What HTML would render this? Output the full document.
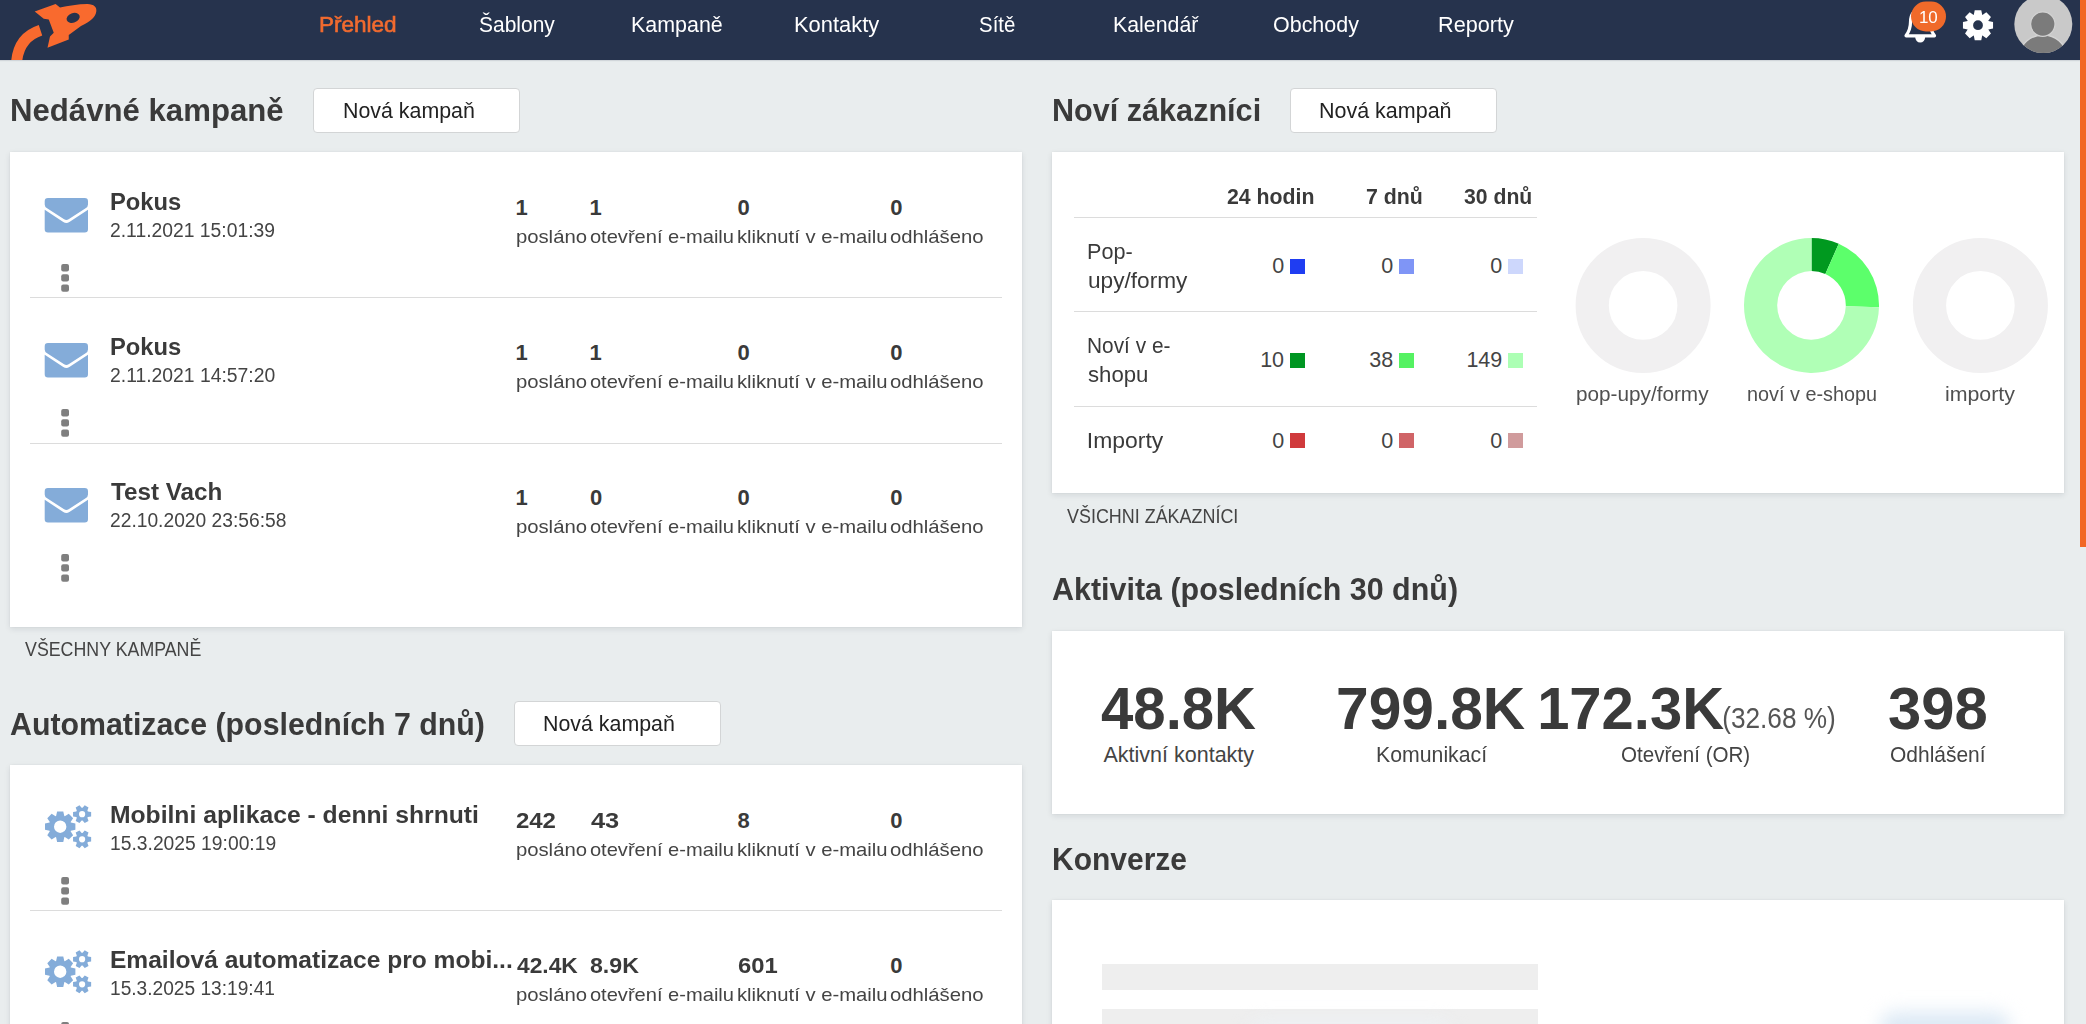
<!DOCTYPE html>
<html><head><meta charset="utf-8"><style>
html,body{margin:0;padding:0;}
body{width:2086px;height:1024px;overflow:hidden;background:#e9edee;font-family:"Liberation Sans",sans-serif;position:relative;}
.t{position:absolute;white-space:nowrap;}
.hdr{position:absolute;left:0;top:0;width:2086px;height:60px;background:#26334d;box-shadow:0 1px 1px rgba(38,51,77,0.12);}
.card{position:absolute;background:#fff;box-shadow:0 2px 6px rgba(20,30,50,0.10),0 0 2px rgba(0,0,0,0.05);}
.btn{position:absolute;background:#fff;border:1px solid #d3d5d6;border-radius:4px;box-sizing:border-box;}
.sep{position:absolute;height:1px;background:#dcdcdc;}
.sq{position:absolute;width:14.5px;height:14.5px;}
svg{position:absolute;left:0;top:0;}
</style></head><body>
<div class="hdr"></div>
<div class="card" style="left:10px;top:152px;width:1012px;height:475px;"></div>
<div class="card" style="left:10px;top:765px;width:1012px;height:300px;"></div>
<div class="card" style="left:1052px;top:152px;width:1012px;height:341px;"></div>
<div class="card" style="left:1052px;top:631px;width:1012px;height:183px;"></div>
<div class="card" style="left:1052px;top:900px;width:1012px;height:200px;"></div>
<div class="btn" style="left:313px;top:88px;width:207px;height:45px;"></div>
<div class="btn" style="left:514px;top:701px;width:207px;height:45px;"></div>
<div class="btn" style="left:1290px;top:88px;width:207px;height:45px;"></div>
<div class="sep" style="left:30px;top:297px;width:972px;"></div>
<div class="sep" style="left:30px;top:443px;width:972px;"></div>
<div class="sep" style="left:30px;top:910px;width:972px;"></div>
<div class="sep" style="left:1074px;top:217px;width:463px;"></div>
<div class="sep" style="left:1074px;top:311px;width:463px;"></div>
<div class="sep" style="left:1074px;top:406px;width:463px;"></div>
<div class="sq" style="left:1290px;top:259px;background:#1f3df2"></div>
<div class="sq" style="left:1399px;top:259px;background:#7f95f6"></div>
<div class="sq" style="left:1508px;top:259px;background:#cdd7fc"></div>
<div class="sq" style="left:1290px;top:353px;background:#009622"></div>
<div class="sq" style="left:1399px;top:353px;background:#55f262"></div>
<div class="sq" style="left:1508px;top:353px;background:#acffb4"></div>
<div class="sq" style="left:1290px;top:433px;background:#d03a3c"></div>
<div class="sq" style="left:1399px;top:433px;background:#d06467"></div>
<div class="sq" style="left:1508px;top:433px;background:#d09b9c"></div>
<div style="position:absolute;left:1102px;top:964px;width:436px;height:26px;background:#eeeeee"></div>
<div style="position:absolute;left:1102px;top:1009px;width:436px;height:26px;background:#eeeeee"></div>
<div style="position:absolute;left:1880px;top:1012px;width:130px;height:30px;border-radius:15px;background:#dce9f5;filter:blur(9px);"></div>
<div style="position:absolute;left:1250px;top:1022px;width:200px;height:20px;border-radius:10px;background:#eef2f6;filter:blur(9px);"></div>
<div style="position:absolute;left:2080px;top:0;width:6px;height:547px;background:#f26724"></div>
<svg width="2086" height="1024" viewBox="0 0 2086 1024">
<g fill="#f96a2e">
<path d="M34.7,11.6 L55.6,4.1 L60,7.5 C68,6 78,4.1 87.5,4.1 C94,4.3 97,7.5 96.3,11.5 C95.5,17 91,21 81,26 L68.75,34.9 L68.75,39.4 L47.5,47.8 L50,36.6 L53.75,32.8 L48.75,19.4 L43.75,18.75 Z M79.5,15.5 A6.6,4.6 -20 1,0 66.8,20.3 A6.6,4.6 -20 1,0 79.5,15.5 Z" fill-rule="evenodd"/>
</g>
<clipPath id="hc"><rect x="0" y="0" width="200" height="60"/></clipPath><path clip-path="url(#hc)" d="M40.5,30.2 C29,34 17.5,43 16.5,64" fill="none" stroke="#f96a2e" stroke-width="11"/>
<g fill="#84acd9"><path d="M48,198.10 H84.7 A3.3,3.3 0 0 1 88,201.40 V204.40 Q88,206.70 85.6,208.30 L68.6,219.30 Q66.35,220.80 64.1,219.30 L47.1,208.30 Q44.7,206.70 44.7,204.40 V201.40 A3.3,3.3 0 0 1 48,198.10 Z"/><path d="M44.7,209.80 L63.3,222.00 Q66.35,224.00 69.4,222.00 L88,209.80 V229.30 A3.3,3.3 0 0 1 84.7,232.60 H48 A3.3,3.3 0 0 1 44.7,229.30 Z"/><path d="M48,343.10 H84.7 A3.3,3.3 0 0 1 88,346.40 V349.40 Q88,351.70 85.6,353.30 L68.6,364.30 Q66.35,365.80 64.1,364.30 L47.1,353.30 Q44.7,351.70 44.7,349.40 V346.40 A3.3,3.3 0 0 1 48,343.10 Z"/><path d="M44.7,354.80 L63.3,367.00 Q66.35,369.00 69.4,367.00 L88,354.80 V374.30 A3.3,3.3 0 0 1 84.7,377.60 H48 A3.3,3.3 0 0 1 44.7,374.30 Z"/><path d="M48,488.10 H84.7 A3.3,3.3 0 0 1 88,491.40 V494.40 Q88,496.70 85.6,498.30 L68.6,509.30 Q66.35,510.80 64.1,509.30 L47.1,498.30 Q44.7,496.70 44.7,494.40 V491.40 A3.3,3.3 0 0 1 48,488.10 Z"/><path d="M44.7,499.80 L63.3,512.00 Q66.35,514.00 69.4,512.00 L88,499.80 V519.30 A3.3,3.3 0 0 1 84.7,522.60 H48 A3.3,3.3 0 0 1 44.7,519.30 Z"/><path fill-rule="evenodd" d="M70.84,822.59 L75.39,823.62 L75.39,829.78 L70.84,830.81 L70.62,831.32 L73.12,835.26 L68.76,839.62 L64.82,837.12 L64.31,837.34 L63.28,841.89 L57.12,841.89 L56.09,837.34 L55.58,837.12 L51.64,839.62 L47.28,835.26 L49.78,831.32 L49.56,830.81 L45.01,829.78 L45.01,823.62 L49.56,822.59 L49.78,822.08 L47.28,818.14 L51.64,813.78 L55.58,816.28 L56.09,816.06 L57.12,811.51 L63.28,811.51 L64.31,816.06 L64.82,816.28 L68.76,813.78 L73.12,818.14 L70.62,822.08Z M66.40,826.70 A6.2,6.2 0 1,0 54.00,826.70 A6.2,6.2 0 1,0 66.40,826.70Z M87.85,811.40 L91.14,812.02 L91.14,816.38 L87.85,817.00 L87.40,817.78 L88.51,820.94 L84.73,823.12 L82.55,820.58 L81.65,820.58 L79.47,823.12 L75.69,820.94 L76.80,817.78 L76.35,817.00 L73.06,816.38 L73.06,812.02 L76.35,811.40 L76.80,810.62 L75.69,807.46 L79.47,805.28 L81.65,807.82 L82.55,807.82 L84.73,805.28 L88.51,807.46 L87.40,810.62Z M85.20,814.20 A3.1,3.1 0 1,0 79.00,814.20 A3.1,3.1 0 1,0 85.20,814.20Z M87.85,836.50 L91.14,837.12 L91.14,841.48 L87.85,842.10 L87.40,842.88 L88.51,846.04 L84.73,848.22 L82.55,845.68 L81.65,845.68 L79.47,848.22 L75.69,846.04 L76.80,842.88 L76.35,842.10 L73.06,841.48 L73.06,837.12 L76.35,836.50 L76.80,835.72 L75.69,832.56 L79.47,830.38 L81.65,832.92 L82.55,832.92 L84.73,830.38 L88.51,832.56 L87.40,835.72Z M85.20,839.30 A3.1,3.1 0 1,0 79.00,839.30 A3.1,3.1 0 1,0 85.20,839.30Z"/><path fill-rule="evenodd" d="M70.84,967.59 L75.39,968.62 L75.39,974.78 L70.84,975.81 L70.62,976.32 L73.12,980.26 L68.76,984.62 L64.82,982.12 L64.31,982.34 L63.28,986.89 L57.12,986.89 L56.09,982.34 L55.58,982.12 L51.64,984.62 L47.28,980.26 L49.78,976.32 L49.56,975.81 L45.01,974.78 L45.01,968.62 L49.56,967.59 L49.78,967.08 L47.28,963.14 L51.64,958.78 L55.58,961.28 L56.09,961.06 L57.12,956.51 L63.28,956.51 L64.31,961.06 L64.82,961.28 L68.76,958.78 L73.12,963.14 L70.62,967.08Z M66.40,971.70 A6.2,6.2 0 1,0 54.00,971.70 A6.2,6.2 0 1,0 66.40,971.70Z M87.85,956.40 L91.14,957.02 L91.14,961.38 L87.85,962.00 L87.40,962.78 L88.51,965.94 L84.73,968.12 L82.55,965.58 L81.65,965.58 L79.47,968.12 L75.69,965.94 L76.80,962.78 L76.35,962.00 L73.06,961.38 L73.06,957.02 L76.35,956.40 L76.80,955.62 L75.69,952.46 L79.47,950.28 L81.65,952.82 L82.55,952.82 L84.73,950.28 L88.51,952.46 L87.40,955.62Z M85.20,959.20 A3.1,3.1 0 1,0 79.00,959.20 A3.1,3.1 0 1,0 85.20,959.20Z M87.85,981.50 L91.14,982.12 L91.14,986.48 L87.85,987.10 L87.40,987.88 L88.51,991.04 L84.73,993.22 L82.55,990.68 L81.65,990.68 L79.47,993.22 L75.69,991.04 L76.80,987.88 L76.35,987.10 L73.06,986.48 L73.06,982.12 L76.35,981.50 L76.80,980.72 L75.69,977.56 L79.47,975.38 L81.65,977.92 L82.55,977.92 L84.73,975.38 L88.51,977.56 L87.40,980.72Z M85.20,984.30 A3.1,3.1 0 1,0 79.00,984.30 A3.1,3.1 0 1,0 85.20,984.30Z"/></g>
<rect x="61.2" y="264.0" width="7.8" height="7.4" rx="2" fill="#7f7f7f"/><rect x="61.2" y="274.2" width="7.8" height="7.4" rx="2" fill="#7f7f7f"/><rect x="61.2" y="284.4" width="7.8" height="7.4" rx="2" fill="#7f7f7f"/><rect x="61.2" y="409.0" width="7.8" height="7.4" rx="2" fill="#7f7f7f"/><rect x="61.2" y="419.2" width="7.8" height="7.4" rx="2" fill="#7f7f7f"/><rect x="61.2" y="429.4" width="7.8" height="7.4" rx="2" fill="#7f7f7f"/><rect x="61.2" y="554.0" width="7.8" height="7.4" rx="2" fill="#7f7f7f"/><rect x="61.2" y="564.2" width="7.8" height="7.4" rx="2" fill="#7f7f7f"/><rect x="61.2" y="574.4" width="7.8" height="7.4" rx="2" fill="#7f7f7f"/><rect x="61.2" y="877.0" width="7.8" height="7.4" rx="2" fill="#7f7f7f"/><rect x="61.2" y="887.2" width="7.8" height="7.4" rx="2" fill="#7f7f7f"/><rect x="61.2" y="897.4" width="7.8" height="7.4" rx="2" fill="#7f7f7f"/><rect x="61.2" y="1022.0" width="7.8" height="7.4" rx="2" fill="#7f7f7f"/><rect x="61.2" y="1032.2" width="7.8" height="7.4" rx="2" fill="#7f7f7f"/><rect x="61.2" y="1042.4" width="7.8" height="7.4" rx="2" fill="#7f7f7f"/>
<circle cx="1643.1" cy="305.4" r="50.9" fill="none" stroke="#f1f0f1" stroke-width="33.2"/><circle cx="1980.4" cy="305.4" r="50.9" fill="none" stroke="#f1f0f1" stroke-width="33.2"/><path fill="#00991f" d="M1811.50,237.90 A67.5,67.5 0 0,1 1838.74,243.64 L1825.34,274.02 A34.3,34.3 0 0,0 1811.50,271.10 Z"/><path fill="#5cff6b" d="M1838.74,243.64 A67.5,67.5 0 0,1 1878.98,307.17 L1845.79,306.30 A34.3,34.3 0 0,0 1825.34,274.02 Z"/><path fill="#b0ffb6" d="M1878.98,307.17 A67.5,67.5 0 1,1 1811.49,237.90 L1811.49,271.10 A34.3,34.3 0 1,0 1845.79,306.30 Z"/>
<!-- bell -->
<g fill="none" stroke="#fff" stroke-width="3.2" stroke-linejoin="round">
<path d="M1906,35.8 L1934.5,35.8 C1931,31 1930,27 1930,22 C1930,14 1926,9.5 1920.2,9.5 C1914.5,9.5 1910.5,14 1910.5,22 C1910.5,27 1909.5,31 1906,35.8 Z"/>
</g>
<path d="M1915.2,37 A5,5.5 0 0 0 1925.2,37 Z" fill="#fff"/>
<rect x="1911" y="1.6" width="35" height="29.8" rx="14.9" fill="#f06a2a"/>
<!-- gear -->
<path fill="#fff" fill-rule="evenodd" d="M1988.38,21.00 L1993.05,21.93 L1993.05,28.47 L1988.38,29.40 L1988.31,29.58 L1990.96,33.52 L1986.32,38.16 L1982.38,35.51 L1982.20,35.58 L1981.27,40.25 L1974.73,40.25 L1973.80,35.58 L1973.62,35.51 L1969.68,38.16 L1965.04,33.52 L1967.69,29.58 L1967.62,29.40 L1962.95,28.47 L1962.95,21.93 L1967.62,21.00 L1967.69,20.82 L1965.04,16.88 L1969.68,12.24 L1973.62,14.89 L1973.80,14.82 L1974.73,10.15 L1981.27,10.15 L1982.20,14.82 L1982.38,14.89 L1986.32,12.24 L1990.96,16.88 L1988.31,20.82Z M1982.90,25.20 A4.9,4.9 0 1,0 1973.10,25.20 A4.9,4.9 0 1,0 1982.90,25.20Z"/>
<!-- avatar -->
<clipPath id="av"><circle cx="2043.3" cy="24.1" r="29"/></clipPath>
<circle cx="2043.3" cy="24.1" r="29" fill="#c9c9c9"/>
<g clip-path="url(#av)"><ellipse cx="2043" cy="55.5" rx="23" ry="20.5" fill="#7b7b7b" stroke="#d4d4d4" stroke-width="1.4"/></g>
<circle cx="2042.8" cy="24.1" r="12.2" fill="#7b7b7b" stroke="#d2d2d2" stroke-width="1.2"/>
</svg>
<div class="t" style="left:319.25px;top:14.00px;font-size:22px;line-height:22px;font-weight:400;color:#f26b2f;transform:scaleX(1.0241);transform-origin:1.75px 0;-webkit-text-stroke:0.6px #f26b2f;">Přehled</div>
<div class="t" style="left:479.20px;top:14.00px;font-size:22px;line-height:22px;font-weight:400;color:#ffffff;transform:scaleX(0.9529);transform-origin:1.00px 0;">Šablony</div>
<div class="t" style="left:631.15px;top:14.00px;font-size:22px;line-height:22px;font-weight:400;color:#ffffff;transform:scaleX(0.9738);transform-origin:1.75px 0;">Kampaně</div>
<div class="t" style="left:794.25px;top:14.00px;font-size:22px;line-height:22px;font-weight:400;color:#ffffff;transform:scaleX(0.9955);transform-origin:1.75px 0;">Kontakty</div>
<div class="t" style="left:978.60px;top:14.00px;font-size:22px;line-height:22px;font-weight:400;color:#ffffff;transform:scaleX(0.9266);transform-origin:1.00px 0;">Sítě</div>
<div class="t" style="left:1112.95px;top:14.00px;font-size:22px;line-height:22px;font-weight:400;color:#ffffff;transform:scaleX(0.9683);transform-origin:1.75px 0;">Kalendář</div>
<div class="t" style="left:1273.40px;top:14.00px;font-size:22px;line-height:22px;font-weight:400;color:#ffffff;transform:scaleX(0.9747);transform-origin:1.00px 0;">Obchody</div>
<div class="t" style="left:1437.95px;top:14.00px;font-size:22px;line-height:22px;font-weight:400;color:#ffffff;transform:scaleX(0.9821);transform-origin:1.75px 0;">Reporty</div>
<div class="t" style="left:1918.75px;top:10.00px;font-size:16px;line-height:16px;font-weight:400;color:#ffffff;transform:scaleX(1.0583);transform-origin:1.25px 0;">10</div>
<div class="t" style="left:10.00px;top:95.00px;font-size:30.5px;line-height:30.5px;font-weight:700;color:#3a3a3a;transform:scaleX(1.0217);transform-origin:2.00px 0;">Nedávné kampaně</div>
<div class="t" style="left:9.75px;top:709.00px;font-size:30.5px;line-height:30.5px;font-weight:700;color:#3a3a3a;transform:scaleX(0.9939);transform-origin:0.75px 0;">Automatizace (posledních 7 dnů)</div>
<div class="t" style="left:1051.70px;top:95.00px;font-size:30.5px;line-height:30.5px;font-weight:700;color:#3a3a3a;transform:scaleX(1.0031);transform-origin:2.00px 0;">Noví zákazníci</div>
<div class="t" style="left:1051.95px;top:574.00px;font-size:30.5px;line-height:30.5px;font-weight:700;color:#3a3a3a;transform:scaleX(0.9983);transform-origin:0.75px 0;">Aktivita (posledních 30 dnů)</div>
<div class="t" style="left:1051.50px;top:844.00px;font-size:30.5px;line-height:30.5px;font-weight:700;color:#3a3a3a;transform:scaleX(0.9832);transform-origin:2.00px 0;">Konverze</div>
<div class="t" style="left:342.75px;top:101.00px;font-size:21.5px;line-height:21.5px;font-weight:400;color:#222222;transform:scaleX(0.9936);transform-origin:1.75px 0;">Nová kampaň</div>
<div class="t" style="left:543.25px;top:714.00px;font-size:21.5px;line-height:21.5px;font-weight:400;color:#222222;transform:scaleX(0.9936);transform-origin:1.75px 0;">Nová kampaň</div>
<div class="t" style="left:1318.75px;top:101.00px;font-size:21.5px;line-height:21.5px;font-weight:400;color:#222222;transform:scaleX(0.9990);transform-origin:1.75px 0;">Nová kampaň</div>
<div class="t" style="left:109.50px;top:191.00px;font-size:23px;line-height:23px;font-weight:700;color:#3a3a3a;transform:scaleX(1.0326);transform-origin:1.50px 0;">Pokus</div>
<div class="t" style="left:110.00px;top:221.00px;font-size:19.5px;line-height:19.5px;font-weight:400;color:#444444;transform:scaleX(0.9901);transform-origin:1.00px 0;">2.11.2021 15:01:39</div>
<div class="t" style="left:515.62px;top:197.00px;font-size:22px;line-height:22px;font-weight:700;color:#3a3a3a;">1</div>
<div class="t" style="left:515.88px;top:228.00px;font-size:18.5px;line-height:18.5px;font-weight:400;color:#444444;transform:scaleX(1.0974);transform-origin:1.12px 0;">posláno</div>
<div class="t" style="left:589.62px;top:197.00px;font-size:22px;line-height:22px;font-weight:700;color:#3a3a3a;">1</div>
<div class="t" style="left:590.25px;top:228.00px;font-size:18.5px;line-height:18.5px;font-weight:400;color:#444444;transform:scaleX(1.0860);transform-origin:0.75px 0;">otevření e-mailu</div>
<div class="t" style="left:737.42px;top:197.00px;font-size:22px;line-height:22px;font-weight:700;color:#3a3a3a;">0</div>
<div class="t" style="left:737.05px;top:228.00px;font-size:18.5px;line-height:18.5px;font-weight:400;color:#444444;transform:scaleX(1.0933);transform-origin:1.25px 0;">kliknutí v e-mailu</div>
<div class="t" style="left:890.33px;top:197.00px;font-size:22px;line-height:22px;font-weight:700;color:#3a3a3a;">0</div>
<div class="t" style="left:890.45px;top:228.00px;font-size:18.5px;line-height:18.5px;font-weight:400;color:#444444;transform:scaleX(1.0969);transform-origin:0.75px 0;">odhlášeno</div>
<div class="t" style="left:109.50px;top:336.00px;font-size:23px;line-height:23px;font-weight:700;color:#3a3a3a;transform:scaleX(1.0326);transform-origin:1.50px 0;">Pokus</div>
<div class="t" style="left:110.00px;top:366.00px;font-size:19.5px;line-height:19.5px;font-weight:400;color:#444444;transform:scaleX(0.9917);transform-origin:1.00px 0;">2.11.2021 14:57:20</div>
<div class="t" style="left:515.62px;top:342.00px;font-size:22px;line-height:22px;font-weight:700;color:#3a3a3a;">1</div>
<div class="t" style="left:515.88px;top:373.00px;font-size:18.5px;line-height:18.5px;font-weight:400;color:#444444;transform:scaleX(1.0974);transform-origin:1.12px 0;">posláno</div>
<div class="t" style="left:589.62px;top:342.00px;font-size:22px;line-height:22px;font-weight:700;color:#3a3a3a;">1</div>
<div class="t" style="left:590.25px;top:373.00px;font-size:18.5px;line-height:18.5px;font-weight:400;color:#444444;transform:scaleX(1.0860);transform-origin:0.75px 0;">otevření e-mailu</div>
<div class="t" style="left:737.42px;top:342.00px;font-size:22px;line-height:22px;font-weight:700;color:#3a3a3a;">0</div>
<div class="t" style="left:737.05px;top:373.00px;font-size:18.5px;line-height:18.5px;font-weight:400;color:#444444;transform:scaleX(1.0933);transform-origin:1.25px 0;">kliknutí v e-mailu</div>
<div class="t" style="left:890.33px;top:342.00px;font-size:22px;line-height:22px;font-weight:700;color:#3a3a3a;">0</div>
<div class="t" style="left:890.45px;top:373.00px;font-size:18.5px;line-height:18.5px;font-weight:400;color:#444444;transform:scaleX(1.0969);transform-origin:0.75px 0;">odhlášeno</div>
<div class="t" style="left:110.75px;top:481.00px;font-size:23px;line-height:23px;font-weight:700;color:#3a3a3a;transform:scaleX(1.0538);transform-origin:0.25px 0;">Test Vach</div>
<div class="t" style="left:110.00px;top:511.00px;font-size:19.5px;line-height:19.5px;font-weight:400;color:#444444;transform:scaleX(0.9857);transform-origin:1.00px 0;">22.10.2020 23:56:58</div>
<div class="t" style="left:515.62px;top:487.00px;font-size:22px;line-height:22px;font-weight:700;color:#3a3a3a;">1</div>
<div class="t" style="left:515.88px;top:518.00px;font-size:18.5px;line-height:18.5px;font-weight:400;color:#444444;transform:scaleX(1.0974);transform-origin:1.12px 0;">posláno</div>
<div class="t" style="left:590.12px;top:487.00px;font-size:22px;line-height:22px;font-weight:700;color:#3a3a3a;">0</div>
<div class="t" style="left:590.25px;top:518.00px;font-size:18.5px;line-height:18.5px;font-weight:400;color:#444444;transform:scaleX(1.0860);transform-origin:0.75px 0;">otevření e-mailu</div>
<div class="t" style="left:737.42px;top:487.00px;font-size:22px;line-height:22px;font-weight:700;color:#3a3a3a;">0</div>
<div class="t" style="left:737.05px;top:518.00px;font-size:18.5px;line-height:18.5px;font-weight:400;color:#444444;transform:scaleX(1.0933);transform-origin:1.25px 0;">kliknutí v e-mailu</div>
<div class="t" style="left:890.33px;top:487.00px;font-size:22px;line-height:22px;font-weight:700;color:#3a3a3a;">0</div>
<div class="t" style="left:890.45px;top:518.00px;font-size:18.5px;line-height:18.5px;font-weight:400;color:#444444;transform:scaleX(1.0969);transform-origin:0.75px 0;">odhlášeno</div>
<div class="t" style="left:109.50px;top:804.00px;font-size:23px;line-height:23px;font-weight:700;color:#3a3a3a;transform:scaleX(1.0736);transform-origin:1.50px 0;">Mobilni aplikace - denni shrnuti</div>
<div class="t" style="left:109.50px;top:834.00px;font-size:19.5px;line-height:19.5px;font-weight:400;color:#444444;transform:scaleX(0.9884);transform-origin:1.50px 0;">15.3.2025 19:00:19</div>
<div class="t" style="left:516.25px;top:810.00px;font-size:22px;line-height:22px;font-weight:700;color:#3a3a3a;transform:scaleX(1.0904);transform-origin:0.75px 0;">242</div>
<div class="t" style="left:515.88px;top:841.00px;font-size:18.5px;line-height:18.5px;font-weight:400;color:#444444;transform:scaleX(1.0974);transform-origin:1.12px 0;">posláno</div>
<div class="t" style="left:590.62px;top:810.00px;font-size:22px;line-height:22px;font-weight:700;color:#3a3a3a;transform:scaleX(1.1551);transform-origin:0.38px 0;">43</div>
<div class="t" style="left:590.25px;top:841.00px;font-size:18.5px;line-height:18.5px;font-weight:400;color:#444444;transform:scaleX(1.0860);transform-origin:0.75px 0;">otevření e-mailu</div>
<div class="t" style="left:737.55px;top:810.00px;font-size:22px;line-height:22px;font-weight:700;color:#3a3a3a;">8</div>
<div class="t" style="left:737.05px;top:841.00px;font-size:18.5px;line-height:18.5px;font-weight:400;color:#444444;transform:scaleX(1.0933);transform-origin:1.25px 0;">kliknutí v e-mailu</div>
<div class="t" style="left:890.33px;top:810.00px;font-size:22px;line-height:22px;font-weight:700;color:#3a3a3a;">0</div>
<div class="t" style="left:890.45px;top:841.00px;font-size:18.5px;line-height:18.5px;font-weight:400;color:#444444;transform:scaleX(1.0969);transform-origin:0.75px 0;">odhlášeno</div>
<div class="t" style="left:109.50px;top:949.00px;font-size:23px;line-height:23px;font-weight:700;color:#3a3a3a;transform:scaleX(1.0684);transform-origin:1.50px 0;">Emailová automatizace pro mobi...</div>
<div class="t" style="left:109.50px;top:979.00px;font-size:19.5px;line-height:19.5px;font-weight:400;color:#444444;transform:scaleX(0.9811);transform-origin:1.50px 0;">15.3.2025 13:19:41</div>
<div class="t" style="left:516.62px;top:955.00px;font-size:22px;line-height:22px;font-weight:700;color:#3a3a3a;transform:scaleX(1.0357);transform-origin:0.38px 0;">42.4K</div>
<div class="t" style="left:515.88px;top:986.00px;font-size:18.5px;line-height:18.5px;font-weight:400;color:#444444;transform:scaleX(1.0974);transform-origin:1.12px 0;">posláno</div>
<div class="t" style="left:590.25px;top:955.00px;font-size:22px;line-height:22px;font-weight:700;color:#3a3a3a;transform:scaleX(1.0527);transform-origin:0.75px 0;">8.9K</div>
<div class="t" style="left:590.25px;top:986.00px;font-size:18.5px;line-height:18.5px;font-weight:400;color:#444444;transform:scaleX(1.0860);transform-origin:0.75px 0;">otevření e-mailu</div>
<div class="t" style="left:737.55px;top:955.00px;font-size:22px;line-height:22px;font-weight:700;color:#3a3a3a;transform:scaleX(1.0827);transform-origin:0.75px 0;">601</div>
<div class="t" style="left:737.05px;top:986.00px;font-size:18.5px;line-height:18.5px;font-weight:400;color:#444444;transform:scaleX(1.0933);transform-origin:1.25px 0;">kliknutí v e-mailu</div>
<div class="t" style="left:890.33px;top:955.00px;font-size:22px;line-height:22px;font-weight:700;color:#3a3a3a;">0</div>
<div class="t" style="left:890.45px;top:986.00px;font-size:18.5px;line-height:18.5px;font-weight:400;color:#444444;transform:scaleX(1.0969);transform-origin:0.75px 0;">odhlášeno</div>
<div class="t" style="left:24.88px;top:640.00px;font-size:19.5px;line-height:19.5px;font-weight:400;color:#444444;transform:scaleX(0.9124);transform-origin:0.12px 0;">VŠECHNY KAMPANĚ</div>
<div class="t" style="left:1227.25px;top:187.00px;font-size:21.5px;line-height:21.5px;font-weight:700;color:#3a3a3a;transform:scaleX(0.9899);transform-origin:0.75px 0;">24 hodin</div>
<div class="t" style="left:1366.42px;top:187.00px;font-size:21.5px;line-height:21.5px;font-weight:700;color:#3a3a3a;transform:scaleX(0.9923);transform-origin:0.88px 0;">7 dnů</div>
<div class="t" style="left:1464.10px;top:187.00px;font-size:21.5px;line-height:21.5px;font-weight:700;color:#3a3a3a;transform:scaleX(0.9855);transform-origin:0.50px 0;">30 dnů</div>
<div class="t" style="left:1087.25px;top:242.00px;font-size:21.5px;line-height:21.5px;font-weight:400;color:#3a3a3a;transform:scaleX(1.0058);transform-origin:1.75px 0;">Pop-</div>
<div class="t" style="left:1087.62px;top:271.00px;font-size:21.5px;line-height:21.5px;font-weight:400;color:#3a3a3a;transform:scaleX(1.0538);transform-origin:1.38px 0;">upy/formy</div>
<div class="t" style="left:1087.25px;top:336.00px;font-size:21.5px;line-height:21.5px;font-weight:400;color:#3a3a3a;transform:scaleX(0.9691);transform-origin:1.75px 0;">Noví v e-</div>
<div class="t" style="left:1088.38px;top:365.00px;font-size:21.5px;line-height:21.5px;font-weight:400;color:#3a3a3a;transform:scaleX(1.0319);transform-origin:0.62px 0;">shopu</div>
<div class="t" style="left:1087.00px;top:431.00px;font-size:21.5px;line-height:21.5px;font-weight:400;color:#3a3a3a;transform:scaleX(1.0657);transform-origin:2.00px 0;">Importy</div>
<div class="t" style="left:1272.17px;top:256.00px;font-size:21.5px;line-height:21.5px;font-weight:400;color:#444444;">0</div>
<div class="t" style="left:1381.17px;top:256.00px;font-size:21.5px;line-height:21.5px;font-weight:400;color:#444444;">0</div>
<div class="t" style="left:1490.17px;top:256.00px;font-size:21.5px;line-height:21.5px;font-weight:400;color:#444444;">0</div>
<div class="t" style="left:1260.17px;top:350.00px;font-size:21.5px;line-height:21.5px;font-weight:400;color:#444444;">10</div>
<div class="t" style="left:1369.30px;top:350.00px;font-size:21.5px;line-height:21.5px;font-weight:400;color:#444444;">38</div>
<div class="t" style="left:1466.42px;top:350.00px;font-size:21.5px;line-height:21.5px;font-weight:400;color:#444444;">149</div>
<div class="t" style="left:1272.17px;top:431.00px;font-size:21.5px;line-height:21.5px;font-weight:400;color:#444444;">0</div>
<div class="t" style="left:1381.17px;top:431.00px;font-size:21.5px;line-height:21.5px;font-weight:400;color:#444444;">0</div>
<div class="t" style="left:1490.17px;top:431.00px;font-size:21.5px;line-height:21.5px;font-weight:400;color:#444444;">0</div>
<div class="t" style="left:1576.25px;top:384.00px;font-size:20px;line-height:20px;font-weight:400;color:#505050;transform:scaleX(1.0369);transform-origin:1.25px 0;">pop-upy/formy</div>
<div class="t" style="left:1746.62px;top:384.00px;font-size:20px;line-height:20px;font-weight:400;color:#505050;transform:scaleX(0.9914);transform-origin:1.38px 0;">noví v e-shopu</div>
<div class="t" style="left:1945.03px;top:384.00px;font-size:20px;line-height:20px;font-weight:400;color:#505050;transform:scaleX(1.0677);transform-origin:1.38px 0;">importy</div>
<div class="t" style="left:1066.88px;top:507.00px;font-size:19.5px;line-height:19.5px;font-weight:400;color:#444444;transform:scaleX(0.9193);transform-origin:0.12px 0;">VŠICHNI ZÁKAZNÍCI</div>
<div class="t" style="left:1101.33px;top:679.00px;font-size:60px;line-height:60px;font-weight:700;color:#3a3a3a;transform:scaleX(0.9683);transform-origin:0.88px 0;">48.8K</div>
<div class="t" style="left:1336.38px;top:679.00px;font-size:60px;line-height:60px;font-weight:700;color:#3a3a3a;transform:scaleX(0.9777);transform-origin:2.62px 0;">799.8K</div>
<div class="t" style="left:1536.55px;top:679.00px;font-size:60px;line-height:60px;font-weight:700;color:#3a3a3a;transform:scaleX(0.9660);transform-origin:3.75px 0;">172.3K</div>
<div class="t" style="left:1721.75px;top:704.00px;font-size:29px;line-height:29px;font-weight:400;color:#555555;transform:scaleX(0.9039);transform-origin:1.75px 0;">(32.68 %)</div>
<div class="t" style="left:1888.12px;top:679.00px;font-size:60px;line-height:60px;font-weight:700;color:#3a3a3a;transform:scaleX(0.9961);transform-origin:1.38px 0;">398</div>
<div class="t" style="left:1103.50px;top:745.00px;font-size:21.5px;line-height:21.5px;font-weight:400;color:#444444;transform:scaleX(1.0000);transform-origin:0.00px 0;">Aktivní kontakty</div>
<div class="t" style="left:1375.95px;top:745.00px;font-size:21.5px;line-height:21.5px;font-weight:400;color:#444444;transform:scaleX(0.9891);transform-origin:1.75px 0;">Komunikací</div>
<div class="t" style="left:1620.70px;top:745.00px;font-size:21.5px;line-height:21.5px;font-weight:400;color:#444444;transform:scaleX(0.9567);transform-origin:1.00px 0;">Otevření (OR)</div>
<div class="t" style="left:1889.90px;top:745.00px;font-size:21.5px;line-height:21.5px;font-weight:400;color:#444444;transform:scaleX(0.9745);transform-origin:1.00px 0;">Odhlášení</div>
</body></html>
